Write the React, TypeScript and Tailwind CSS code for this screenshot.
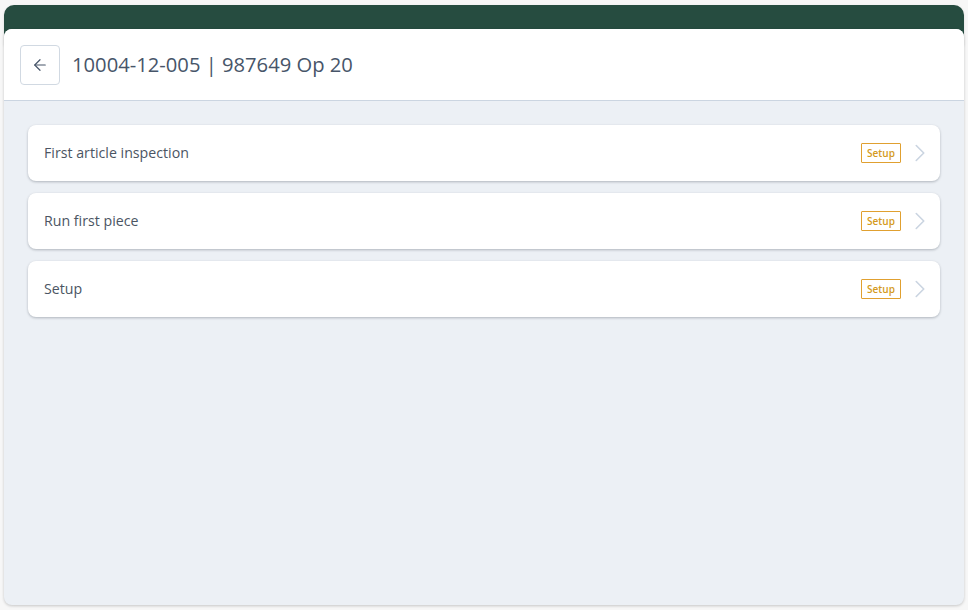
import React from 'react'
import { ArrowLeft, ChevronRight } from 'lucide-react'

const steps = ['First article inspection', 'Run first piece', 'Setup']

export default function App() {
  return (
    <div className="w-[968px] h-[610px] bg-[#f7f7f7] px-[4px] pt-[5px] font-['Open_Sans',sans-serif] overflow-hidden">
      {/* background page header, mostly covered by the sheet */}
      <div className="h-[40px] bg-[#264c40] rounded-t-[10px] px-[22px] pt-[17px] shadow">
        <span className="text-[15px] font-bold text-white/25 leading-none">CNC Special Applied Industries</span>
      </div>

      {/* sheet */}
      <div className="-mt-[16px] relative h-[576px] flex flex-col rounded-t-[8px] rounded-b-[8px] bg-[#ecf0f5] shadow-[0_1px_3px_rgba(0,0,0,0.2)] overflow-hidden">
        <div className="h-[72px] shrink-0 bg-white border-b border-[#cbd5e1] flex items-center gap-3 px-4">
          <button className="w-10 h-10 flex items-center justify-center rounded border border-[#d1d9e2] text-[#475569]">
            <ArrowLeft size={18} strokeWidth={1.6} />
          </button>
          <h1 className="text-[20.2px] text-[#475569] leading-none">10004-12-005 | 987649 Op 20</h1>
        </div>

        <div className="flex-1 px-6 py-6 flex flex-col gap-3">
          {steps.map(s => (
            <div key={s} className="h-14 bg-white rounded-lg shadow-[0_1px_3px_rgba(15,23,42,0.2),0_1px_2px_rgba(15,23,42,0.08)] flex items-center pl-4 pr-[5px]">
              <span className="flex-1 text-[14.2px] text-[#4b5563]">{s}</span>
              <span className="h-5 w-10 flex items-center justify-center border border-[#e0a030] rounded-[1px] text-[10px] font-semibold text-[#d49a20] leading-none">Setup</span>
              <ChevronRight size={30} strokeWidth={1.3} className="ml-1 text-[#cbd5e1]" />
            </div>
          ))}
        </div>
      </div>
    </div>
  )
}
